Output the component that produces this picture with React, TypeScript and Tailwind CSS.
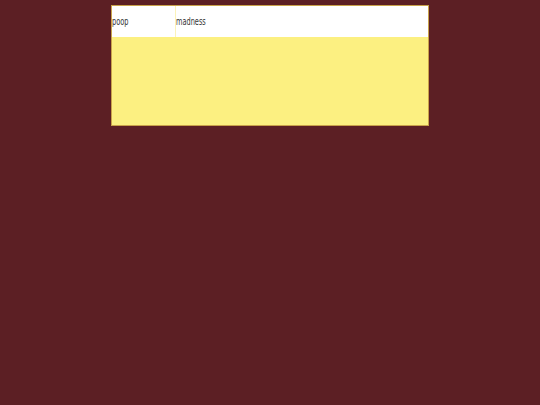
export default function App() {
  return (
    <div className="min-h-[405px] w-full bg-[#5c1f24] pt-[5px]">
      <div className="mx-auto w-[318px] h-[121px] border border-[#c9a24a] bg-[#fcf081]">
        <div className="flex h-[31px] bg-white text-[11px] text-[#333] font-['DejaVu_Sans',sans-serif]">
          <div className="w-[64px] border-r border-[#fcf3b8] flex items-center pt-[2px]">
            <span className="inline-block origin-left scale-x-[0.6]">poop</span>
          </div>
          <div className="flex-1 flex items-center pt-[2px]">
            <span className="inline-block origin-left scale-x-[0.6]">madness</span>
          </div>
        </div>
      </div>
    </div>
  );
}
